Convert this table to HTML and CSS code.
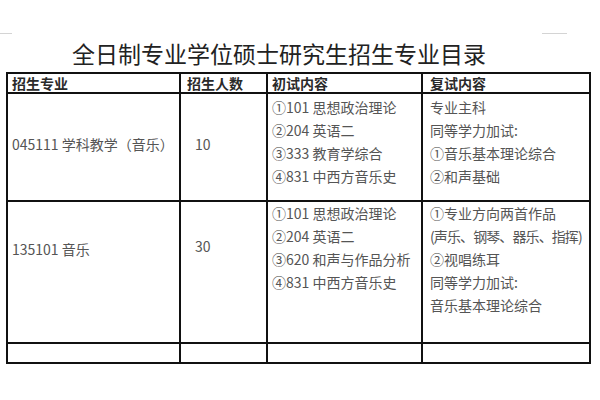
FILE: index.html
```html
<!DOCTYPE html>
<html lang="zh">
<head>
<meta charset="utf-8">
<link rel="stylesheet" href="styles.css">
</head>
<body>
<div class="page">
  <div class="marks"><span class="mark mark-left"></span><span class="mark mark-right"></span></div>
  <h1 class="title">全日制专业学位硕士研究生招生专业目录</h1>
  <div class="catalog">
    <div class="cell head p1">招生专业</div>
    <div class="cell head p2">招生人数</div>
    <div class="cell head p3">初试内容</div>
    <div class="cell head p4">复试内容</div>

    <div class="cell p1"><div class="single r1-major">045111 学科教学（音乐）</div></div>
    <div class="cell p2num"><div class="single r1-count">10</div></div>
    <div class="cell p3 list r1-list"><div>①101 思想政治理论</div><div>②204 英语二</div><div>③333 教育学综合</div><div>④831 中西方音乐史</div></div>
    <div class="cell p4 list r1-list"><div>专业主科</div><div>同等学力加试:</div><div>①音乐基本理论综合</div><div>②和声基础</div></div>

    <div class="cell p1"><div class="single r2-major">135101 音乐</div></div>
    <div class="cell p2num"><div class="single r2-count">30</div></div>
    <div class="cell p3 list r2-list"><div>①101 思想政治理论</div><div>②204 英语二</div><div>③620 和声与作品分析</div><div>④831 中西方音乐史</div></div>
    <div class="cell p4 list r2-list"><div>①专业方向两首作品</div><div class="tight">(声乐、钢琴、器乐、指挥)</div><div>②视唱练耳</div><div>同等学力加试:</div><div>音乐基本理论综合</div></div>

    <div class="cell"></div><div class="cell"></div><div class="cell"></div><div class="cell"></div>
  </div>
</div>
</body>
</html>
```

FILE: styles.css
```css
html, body {
  margin: 0;
  padding: 0;
  background: #fff;
}
body {
  width: 600px;
  height: 400px;
  overflow: hidden;
  font-family: "Noto Sans CJK SC", "Liberation Sans", sans-serif;
  color: #555;
}
.page {
  padding-top: 33px;
}
.marks {
  display: flex;
  height: 2px;
}
.mark {
  display: block;
  height: 1px;
  background: #d4d4d4;
}
.mark-left { width: 12px; }
.mark-right { width: 25px; margin-left: 530px; }
.title {
  margin: 0;
  padding: 7px 0 0 72px;
  height: 30px;
  font-size: 23px;
  line-height: 23px;
  font-weight: 400;
  color: #222;
  white-space: nowrap;
}
.catalog {
  margin-left: 6px;
  width: 585px;
  box-sizing: border-box;
  display: grid;
  grid-template-columns: 171px 85px 153px 166px;
  grid-template-rows: 18px 106px 140px 18px;
  gap: 2px;
  padding: 2px;
  background: #111;
  font-size: 14px;
}
.cell {
  background: #fff;
  white-space: nowrap;
  overflow: hidden;
}
.head {
  line-height: 18px;
  font-weight: 700;
  color: #2a2a2a;
}
.p1 { padding-left: 4px; }
.p2 { padding-left: 6px; }
.p2num { padding-left: 14px; }
.p3 { padding-left: 4px; }
.p4 { padding-left: 7px; }
.single { line-height: 23px; }
.r1-major { padding-top: 39px; }
.r1-count { padding-top: 39px; }
.r2-major { padding-top: 36px; }
.r2-count { padding-top: 33px; }
.list { line-height: 23px; }
.r1-list { padding-top: 2px; }
.r2-list { padding-top: 0; }
.tight { letter-spacing: -0.9px; }
```
